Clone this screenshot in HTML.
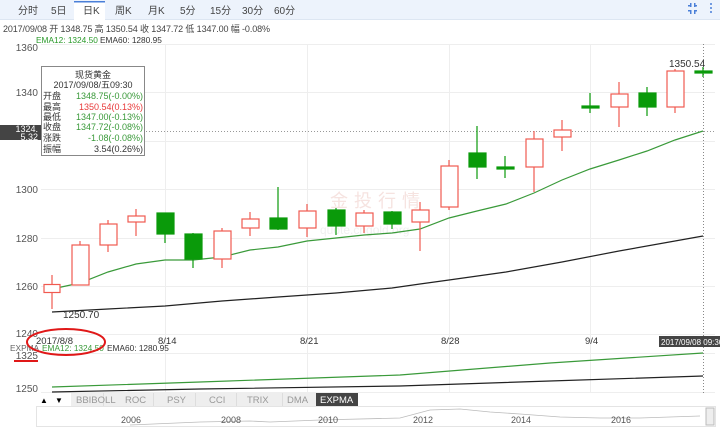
<!DOCTYPE html>
<html><head><meta charset="utf-8"><style>
body{margin:0;width:720px;height:435px;overflow:hidden;background:#fff;font-family:"Liberation Sans","Noto Sans CJK SC",sans-serif;}
svg text{font-family:"Liberation Sans","Noto Sans CJK SC",sans-serif;}
</style></head><body>
<svg width="720" height="435" xmlns="http://www.w3.org/2000/svg" font-size="9">
<rect x="0" y="0" width="720" height="20" fill="#edf3fc"/>
<line x1="0" y1="19.5" x2="720" y2="19.5" stroke="#dde6f2"/>
<rect x="74" y="1" width="31" height="19" fill="#fff"/>
<rect x="74" y="1" width="31" height="1.5" fill="#4a7fd8"/>
<g fill="#444" font-size="10">
<text x="18" y="14">分时</text><text x="51" y="14">5日</text><text x="83" y="14">日K</text>
<text x="115" y="14">周K</text><text x="148" y="14">月K</text><text x="180" y="14">5分</text>
<text x="210" y="14">15分</text><text x="242" y="14">30分</text><text x="274" y="14">60分</text>
</g>
<g fill="#4a7fd8"><rect x="688" y="5" width="3" height="1.5"/><rect x="690" y="3" width="1.5" height="4"/><rect x="694" y="5" width="3" height="1.5"/><rect x="694" y="3" width="1.5" height="4"/><rect x="688" y="10" width="3" height="1.5"/><rect x="690" y="10" width="1.5" height="4"/><rect x="694" y="10" width="3" height="1.5"/><rect x="694" y="10" width="1.5" height="4"/>
<circle cx="711" cy="4" r="1"/><circle cx="711" cy="8" r="1"/><circle cx="711" cy="12" r="1"/></g>
<text x="3" y="32" fill="#444" textLength="267">2017/09/08 开 1348.75 高 1350.54 收 1347.72 低 1347.00 幅 -0.08%</text>
<text x="36" y="43" fill="#2a9a2a" font-size="8.3">EMA12: 1324.50</text><text x="100" y="43" fill="#333" font-size="8.3">EMA60: 1280.95</text>
<g stroke="#eee" stroke-width="1">
<line x1="41" y1="44.5" x2="715" y2="44.5"/><line x1="41" y1="92.5" x2="715" y2="92.5"/><line x1="41" y1="141.5" x2="715" y2="141.5"/>
<line x1="41" y1="189.5" x2="715" y2="189.5"/><line x1="41" y1="238.5" x2="715" y2="238.5"/><line x1="41" y1="286.5" x2="715" y2="286.5"/><line x1="41" y1="334.5" x2="715" y2="334.5"/>
<line x1="165.5" y1="44" x2="165.5" y2="394"/><line x1="307.5" y1="44" x2="307.5" y2="394"/><line x1="449.5" y1="44" x2="449.5" y2="394"/><line x1="590.5" y1="44" x2="590.5" y2="394"/>
<line x1="41" y1="353.5" x2="715" y2="353.5"/><line x1="41" y1="392.5" x2="715" y2="392.5"/>
</g>
<g fill="#555" text-anchor="end" font-size="10"><text x="38" y="51">1360</text><text x="38" y="96">1340</text><text x="38" y="193">1300</text><text x="38" y="242">1280</text><text x="38" y="290">1260</text><text x="38" y="337">1240</text><text x="38" y="359">1325</text><text x="38" y="392">1250</text></g>
<text x="330" y="207" fill="#f6e3e0" font-size="18" letter-spacing="6">金投行情</text>
<text x="320" y="234" fill="#f0f0f0" font-size="12">quote.cngold.org</text>
<line x1="41" y1="131.5" x2="715" y2="131.5" stroke="#999" stroke-dasharray="1,2"/>
<line x1="703.5" y1="44" x2="703.5" y2="394" stroke="#888" stroke-dasharray="1,2"/>
<rect x="0" y="125" width="41" height="15" fill="#444"/>
<text x="38" y="132" fill="#fff" text-anchor="end" font-size="9">1324.</text><text x="38" y="140" fill="#fff" text-anchor="end" font-size="9">5.32</text>
<polyline fill="none" stroke="#3a9a3a" stroke-width="1.2" points="52,289 80,283 108,272 136,264 165,260 193,260 222,257 250,250 278,247 307,241 336,238 364,235 392,233 420,229 449,218 477,211 506,204 534,193 562,180 590,169 619,160 647,151 675,140 703,131"/>
<polyline fill="none" stroke="#222" stroke-width="1.2" points="52,312 108,309 165,306 222,301 278,297 336,293 392,288 420,284 449,280 506,272 562,262 619,251 675,241 703,236"/>
<text x="63" y="318" fill="#333" font-size="10">1250.70</text>
<text x="669" y="67" fill="#333" font-size="10">1350.54</text>
<g stroke="#f05a50" fill="#fff" stroke-width="1.2">
<line x1="52" y1="275" x2="52" y2="309"/><rect x="44" y="284.5" width="16" height="8"/>
<line x1="80" y1="241" x2="80" y2="285"/><rect x="72" y="245" width="17" height="40"/>
<line x1="108" y1="220" x2="108" y2="252"/><rect x="100" y="224" width="17" height="21"/>
<line x1="136" y1="209" x2="136" y2="236"/><rect x="128" y="216" width="17" height="6"/>
<line x1="222" y1="228" x2="222" y2="268"/><rect x="214" y="231" width="17" height="28"/>
<line x1="250" y1="212" x2="250" y2="236"/><rect x="242" y="219" width="17" height="9"/>
<line x1="307" y1="204" x2="307" y2="237"/><rect x="299" y="211" width="17" height="17"/>
<line x1="364" y1="210" x2="364" y2="233"/><rect x="356" y="213" width="17" height="13"/>
<line x1="420" y1="202" x2="420" y2="251"/><rect x="412" y="210" width="17" height="12"/>
<line x1="449" y1="160" x2="449" y2="210"/><rect x="441" y="166" width="17" height="41"/>
<line x1="534" y1="131" x2="534" y2="192"/><rect x="526" y="139" width="17" height="28"/>
<line x1="562" y1="120" x2="562" y2="151"/><rect x="554" y="130" width="17" height="7"/>
<line x1="619" y1="82" x2="619" y2="127"/><rect x="611" y="94" width="17" height="13"/>
<line x1="675" y1="69" x2="675" y2="113"/><rect x="667" y="71" width="17" height="36"/>
</g>
<g stroke="#0a9a0a" fill="#0a9a0a" stroke-width="1.2">
<line x1="165" y1="213" x2="165" y2="243"/><rect x="157" y="213" width="17" height="21"/>
<line x1="193" y1="233" x2="193" y2="268"/><rect x="185" y="234" width="17" height="25"/>
<line x1="278" y1="187" x2="278" y2="230"/><rect x="270" y="218" width="17" height="11"/>
<line x1="336" y1="208" x2="336" y2="235"/><rect x="328" y="210" width="17" height="16"/>
<line x1="392" y1="211" x2="392" y2="229"/><rect x="384" y="212" width="17" height="12"/>
<line x1="477" y1="126" x2="477" y2="179"/><rect x="469" y="153" width="17" height="14"/>
<line x1="505" y1="156" x2="505" y2="178"/><rect x="497" y="167" width="17" height="2"/>
<line x1="590" y1="93" x2="590" y2="113"/><rect x="582" y="106" width="17" height="2"/>
<line x1="647" y1="87" x2="647" y2="116"/><rect x="639" y="93" width="17" height="14"/>
<line x1="703" y1="67" x2="703" y2="77"/><rect x="695" y="71" width="17" height="2"/>
</g>
<rect x="41.5" y="66.5" width="103" height="89" fill="#fff" stroke="#888"/>
<g font-size="9"><text x="93" y="78" text-anchor="middle" fill="#333">现货黄金</text><text x="93" y="88" text-anchor="middle" fill="#333">2017/09/08/五09:30</text>
<g fill="#333"><text x="43" y="99">开盘</text><text x="43" y="110">最高</text><text x="43" y="120">最低</text><text x="43" y="130">收盘</text><text x="43" y="141">涨跌</text><text x="43" y="152">振幅</text></g>
<g text-anchor="end"><text x="143" y="99" fill="#3a9a3a">1348.75(-0.00%)</text><text x="143" y="110" fill="#e83a3a">1350.54(0.13%)</text><text x="143" y="120" fill="#3a9a3a">1347.00(-0.13%)</text><text x="143" y="130" fill="#3a9a3a">1347.72(-0.08%)</text><text x="143" y="141" fill="#3a9a3a">-1.08(-0.08%)</text><text x="143" y="152" fill="#333">3.54(0.26%)</text></g></g>
<g fill="#333" font-size="9.5"><text x="36" y="344">2017/8/8</text><text x="158" y="344">8/14</text><text x="300" y="344">8/21</text><text x="441" y="344">8/28</text><text x="585" y="344">9/4</text></g>
<rect x="659" y="336" width="61" height="11" fill="#444"/><text x="661" y="345" fill="#fff" font-size="8">2017/09/08 09:30</text>
<text x="10" y="351" fill="#666" font-size="8.3">EXPMA</text><text x="42" y="351" fill="#3a9a3a" font-size="8.3">EMA12: 1324.50</text><text x="107" y="351" fill="#333" font-size="8.3">EMA60: 1280.95</text>
<polyline fill="none" stroke="#3a9a3a" stroke-width="1.2" points="52,387 200,382 400,375 550,363 703,353"/>
<polyline fill="none" stroke="#222" stroke-width="1.2" points="52,392 200,389 400,386 550,381 703,376"/>
<ellipse cx="66" cy="342" rx="39" ry="13" fill="none" stroke="#e01818" stroke-width="2"/>
<line x1="14" y1="361" x2="38" y2="361" stroke="#e01818" stroke-width="2"/>
<rect x="36" y="393" width="680" height="13" fill="#fff"/>
<text x="40" y="403" font-size="8">▲</text><text x="55" y="403" font-size="8">▼</text>
<rect x="71" y="393" width="245" height="13" fill="#eee"/>
<g stroke="#ddd"><line x1="103.5" y1="393" x2="103.5" y2="406"/><line x1="153.5" y1="393" x2="153.5" y2="406"/><line x1="195.5" y1="393" x2="195.5" y2="406"/><line x1="236.5" y1="393" x2="236.5" y2="406"/><line x1="282.5" y1="393" x2="282.5" y2="406"/></g>
<g fill="#999" font-size="9.5"><text x="76" y="403">BBIBOLL</text><text x="125" y="403">ROC</text><text x="167" y="403">PSY</text><text x="209" y="403">CCI</text><text x="247" y="403">TRIX</text><text x="287" y="403">DMA</text></g>
<rect x="316" y="393" width="42" height="13" fill="#444"/><text x="320" y="403" fill="#fff" font-size="9.5">EXPMA</text>
<rect x="36.5" y="406.5" width="679" height="20" fill="#fff" stroke="#e4e4e4"/>
<polyline fill="none" stroke="#bbb" stroke-width="0.8" points="130,425 200,422 250,421 270,422 320,420 400,418 430,410 460,409 490,412 520,414 560,417 600,418 640,418 700,416"/>
<g fill="#555" font-size="9"><text x="121" y="423">2006</text><text x="221" y="423">2008</text><text x="318" y="423">2010</text><text x="413" y="423">2012</text><text x="511" y="423">2014</text><text x="611" y="423">2016</text></g>
<rect x="706" y="408" width="8" height="17" fill="#eee" stroke="#bbb"/>
</svg>
</body></html>
